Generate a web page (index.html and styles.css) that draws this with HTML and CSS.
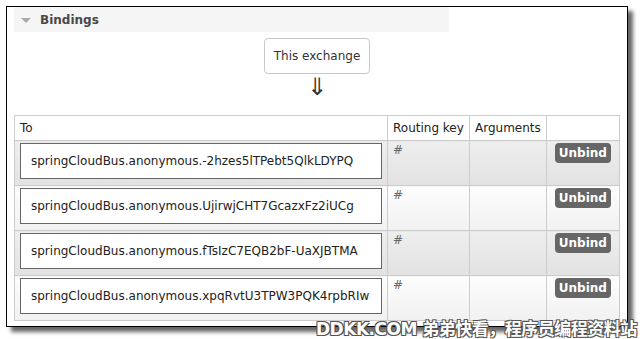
FILE: index.html
```html
<!DOCTYPE html>
<html lang="en">

<head>
    <meta charset="UTF-8">
    <title>Bindings</title>
    <link rel="stylesheet" href="styles.css">
</head>

<body>
    <div class="frame">
        <div class="section-head">
            <span class="toggle"></span>
            <h2>Bindings</h2>
        </div>

        <div class="source">
            <div class="exchange">This exchange</div>
            <div class="arrow">&#8659;</div>
        </div>

        <table class="bindings">
            <thead>
                <tr>
                    <th class="col-to">To</th>
                    <th class="col-key">Routing key</th>
                    <th class="col-args">Arguments</th>
                    <th class="col-act"></th>
                </tr>
            </thead>
            <tbody>
                <tr class="alt1">
                    <td><span class="queue">springCloudBus.anonymous.-2hzes5lTPebt5QlkLDYPQ</span></td>
                    <td>#</td>
                    <td></td>
                    <td class="act"><button type="button">Unbind</button></td>
                </tr>
                <tr class="alt2">
                    <td><span class="queue">springCloudBus.anonymous.UjirwjCHT7GcazxFz2iUCg</span></td>
                    <td>#</td>
                    <td></td>
                    <td class="act"><button type="button">Unbind</button></td>
                </tr>
                <tr class="alt1">
                    <td><span class="queue">springCloudBus.anonymous.fTsIzC7EQB2bF-UaXJBTMA</span></td>
                    <td>#</td>
                    <td></td>
                    <td class="act"><button type="button">Unbind</button></td>
                </tr>
                <tr class="alt2">
                    <td><span class="queue">springCloudBus.anonymous.xpqRvtU3TPW3PQK4rpbRIw</span></td>
                    <td>#</td>
                    <td></td>
                    <td class="act"><button type="button">Unbind</button></td>
                </tr>
            </tbody>
        </table>
    </div>

    <div class="watermark">DDKK.COM 弟弟快看，程序员编程资料站</div>
</body>

</html>
```

FILE: styles.css
```css
body {
    margin: 0;
    width: 640px;
    height: 339px;
    overflow: hidden;
    position: relative;
    background-color: white;
    font-family: "DejaVu Sans", Verdana, sans-serif;
    font-size: 12px;
    color: #222;
}

.frame {
    margin: 6px 0 0 6px;
    width: 606px;
    height: 319px;
    padding: 0 7px;
    border: 1px solid black;
    background-color: white;
    box-shadow: 5px 5px 4px rgba(0, 0, 0, 0.6);
}

.section-head {
    display: flex;
    align-items: center;
    width: 435px;
    height: 25px;
    background-color: #f5f5f5;
}

.toggle {
    margin: 2px 9px 0 7px;
    border-left: 5px solid transparent;
    border-right: 5px solid transparent;
    border-top: 5px solid #aaa;
}

h2 {
    margin: 0;
    font-size: 12px;
    font-weight: bold;
    color: #484848;
}

.source {
    display: flex;
    flex-direction: column;
    align-items: center;
    padding: 6px 0 0 0;
    height: 77px;
}

.exchange {
    padding: 0 9px;
    height: 34px;
    line-height: 34px;
    border: 1px solid #c8c8c8;
    border-radius: 4px;
    color: #333;
}

.arrow {
    font-size: 24px;
    line-height: 26px;
    color: #333;
}

.bindings {
    width: 606px;
    border-collapse: collapse;
    border: 1px solid #ccc;
}

th,
td {
    border: 1px solid #ccc;
    text-align: left;
    vertical-align: top;
    padding: 2px 5px;
    font-weight: normal;
}

th {
    height: 19px;
    line-height: 20px;
    padding-top: 2px;
    background-color: white;
}

.col-to {
    width: 362px;
}

.col-key {
    width: 71px;
}

.col-args {
    width: 65px;
}

td {
    height: 40px;
    color: #666;
}

.alt1 td {
    background: linear-gradient(#eeeeee, #e2e2e2);
}

.alt2 td {
    background: linear-gradient(#fdfdfd, #f1f1f1);
}

.queue {
    display: block;
    height: 34px;
    line-height: 34px;
    padding: 0 10px;
    border: 1px solid #666;
    background-color: white;
    color: #222;
    white-space: nowrap;
}

.act {
    text-align: center;
}

button {
    font-family: "DejaVu Sans", Verdana, sans-serif;
    font-size: 12px;
    font-weight: bold;
    color: white;
    background-color: #666;
    border: none;
    border-radius: 4px;
    padding: 0 4px;
    height: 20px;
    margin-top: 0;
}

.watermark {
    position: absolute;
    left: 316px;
    top: 318px;
    font-family: "DejaVu Sans", "Noto Sans CJK SC", sans-serif;
    font-size: 17px;
    font-weight: bold;
    line-height: 22px;
    letter-spacing: -0.5px;
    color: white;
    white-space: nowrap;
    text-shadow: 1px 1px 0 #555, -1px -1px 0 #555, 1px -1px 0 #555, -1px 1px 0 #555;
}
```
